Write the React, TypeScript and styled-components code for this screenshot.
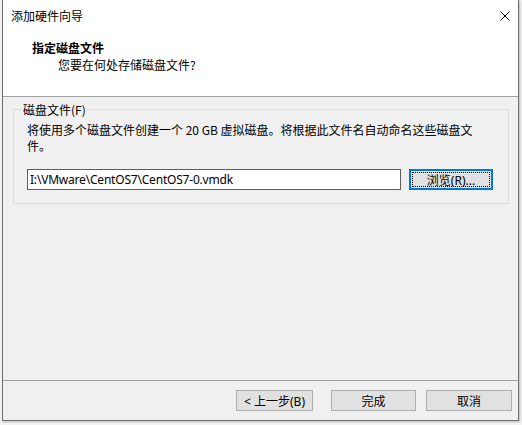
import styled, { createGlobalStyle } from "styled-components";

const GlobalStyle = createGlobalStyle`
  html, body {
    margin: 0;
    padding: 0;
    background: #f3f3f3;
  }
  body {
    font-family: "Segoe UI", "Noto Sans", "Noto Sans CJK SC", sans-serif;
    font-size: 12px;
    color: #000;
  }
`;

const Screen = styled.div`
  width: 522px;
  height: 425px;
  padding-left: 2px;
  box-sizing: border-box;
  overflow: hidden;
`;

const Dialog = styled.div`
  width: 517px;
  height: 421px;
  box-sizing: border-box;
  border: 1px solid #6f6f6f;
  border-top: 0;
  background: #f0f0f0;
  display: flex;
  flex-direction: column;
  box-shadow: 1px 1px 2px rgba(0, 0, 0, 0.25);
`;

const TitleBar = styled.div`
  height: 31px;
  background: #fff;
  display: flex;
  align-items: center;
  justify-content: space-between;
  padding-left: 8px;
  font-family: "Noto Sans CJK SC", sans-serif;
  font-size: 12px;
  line-height: 17px;
`;

const CloseButton = styled.div`
  width: 26px;
  height: 28px;
  display: flex;
  align-items: center;
  justify-content: center;
`;

const Header = styled.div`
  height: 57px;
  background: #fff;
  border-bottom: 1px solid #a0a0a0;
  padding: 8px 0 0 29px;
  font-family: "Noto Sans CJK SC", sans-serif;
  line-height: 17px;
`;

const Heading = styled.div`
  font-weight: bold;
`;

const SubHeading = styled.div`
  margin-left: 26px;
`;

const Body = styled.div`
  flex: 1;
  padding: 4px 9px 0 10px;
`;

const Group = styled.fieldset`
  margin: 0;
  padding: 4px 13px 13px 13px;
  border: 1px solid #dcdcdc;
  min-width: 0;
`;

const GroupLabel = styled.legend`
  padding: 0 1px;
  margin-left: -5px;
  font-family: "Noto Sans CJK SC", sans-serif;
  line-height: 17px;
`;

const Description = styled.p`
  margin: 0;
  font-family: "Noto Sans CJK SC", sans-serif;
  line-height: 16px;
  white-space: nowrap;
`;

const PathRow = styled.div`
  display: flex;
  align-items: center;
  margin-top: 15px;
`;

const PathInput = styled.div`
  width: 374px;
  height: 21px;
  box-sizing: border-box;
  border: 1px solid #5e5e5e;
  background: #fff;
  padding: 0 2px;
  display: flex;
  align-items: center;
  font-size: 12px;
  letter-spacing: -0.2px;
`;

const Button = styled.button<{ $width: number; $focused?: boolean }>`
  width: ${(p) => p.$width}px;
  height: 21px;
  box-sizing: border-box;
  margin: 0;
  padding: 0;
  border: 1px solid ${(p) => (p.$focused ? "#0078d7" : "#adadad")};
  box-shadow: ${(p) => (p.$focused ? "inset 0 0 0 1px #0078d7" : "none")};
  background: #e1e1e1;
  font-family: "Segoe UI", "Noto Sans", "Noto Sans CJK SC", sans-serif;
  font-size: 12px;
  color: #000;
  position: relative;
  display: flex;
  align-items: center;
  justify-content: center;
  &::after {
    content: "";
    display: ${(p) => (p.$focused ? "block" : "none")};
    position: absolute;
    inset: 2px;
    border: 1px dotted #000;
  }
`;

const BrowseButton = styled(Button)`
  margin-left: 8px;
`;

const Footer = styled.div`
  height: 39px;
  border-top: 1px solid #a0a0a0;
  display: flex;
  align-items: center;
  justify-content: flex-end;
  padding-right: 6px;
`;

const FooterGap = styled.div<{ $w: number }>`
  width: ${(p) => p.$w}px;
`;

export default function App() {
  return (
    <>
      <GlobalStyle />
      <Screen>
        <Dialog>
          <TitleBar>
            <span>添加硬件向导</span>
            <CloseButton>
              <svg width="10" height="10" viewBox="0 0 10 10">
                <path d="M0.5 0.5 L9.5 9.5 M9.5 0.5 L0.5 9.5" stroke="#000" strokeWidth="1" fill="none" />
              </svg>
            </CloseButton>
          </TitleBar>
          <Header>
            <Heading>指定磁盘文件</Heading>
            <SubHeading>您要在何处存储磁盘文件?</SubHeading>
          </Header>
          <Body>
            <Group>
              <GroupLabel>磁盘文件(F)</GroupLabel>
              <Description>
                将使用多个磁盘文件创建一个 20 GB 虚拟磁盘。将根据此文件名自动命名这些磁盘文
                <br />
                件。
              </Description>
              <PathRow>
                <PathInput>I:\VMware\CentOS7\CentOS7-0.vmdk</PathInput>
                <BrowseButton $width={84} $focused>
                  浏览(R)...
                </BrowseButton>
              </PathRow>
            </Group>
          </Body>
          <Footer>
            <Button $width={77}>&lt; 上一步(B)</Button>
            <FooterGap $w={18} />
            <Button $width={85}>完成</Button>
            <FooterGap $w={10} />
            <Button $width={86}>取消</Button>
          </Footer>
        </Dialog>
      </Screen>
    </>
  );
}
